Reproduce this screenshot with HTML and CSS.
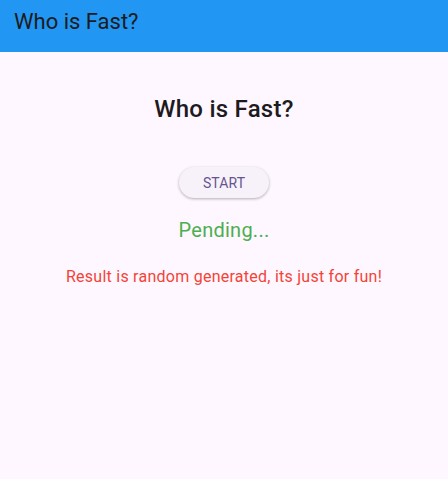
FILE: index.html
```html
<!DOCTYPE html>
<html>
<head>
<meta charset="utf-8">
<link rel="stylesheet" href="styles.css">
</head>
<body>
<header class="appbar"><span class="appbar-title">Who is Fast?</span></header>
<main class="content">
  <h1 class="title">Who is Fast?</h1>
  <button class="start-btn">START</button>
  <div class="status">Pending...</div>
  <div class="note">Result is random generated, its just for fun!</div>
</main>
</body>
</html>
```
FILE: styles.css
```css
html, body {
  margin: 0;
  padding: 0;
  height: 100%;
  background: #fef7ff;
  font-family: Roboto, "Noto Sans", sans-serif;
}
.appbar {
  height: 52px;
  box-sizing: border-box;
  background: #2196f3;
  display: flex;
  align-items: flex-start;
  padding: 9px 0 0 14px;
}
.appbar-title {
  font-size: 22px;
  line-height: 26px;
  color: #1d1b20;
}
.content {
  display: flex;
  flex-direction: column;
  align-items: center;
}
.title {
  margin: 41px 0 0;
  font-size: 24px;
  font-weight: 500;
  letter-spacing: 0.25px;
  color: #1d1b20;
  line-height: 32px;
}
.start-btn {
  margin-top: 42px;
  width: 90px;
  height: 31px;
  border: none;
  border-radius: 16px;
  background: #f7f2fa;
  color: #65558f;
  font-family: Roboto, sans-serif;
  font-size: 14px;
  font-weight: 400;
  letter-spacing: 0.1px;
  box-shadow: 0 1px 3px rgba(0,0,0,0.3);
  padding: 0;
}
.status {
  margin-top: 18px;
  font-size: 20px;
  letter-spacing: 0.25px;
  color: #4caf50;
  line-height: 28px;
}
.note {
  margin-top: 21px;
  font-size: 16px;
  letter-spacing: 0.25px;
  color: #f44336;
  line-height: 24px;
}
```
